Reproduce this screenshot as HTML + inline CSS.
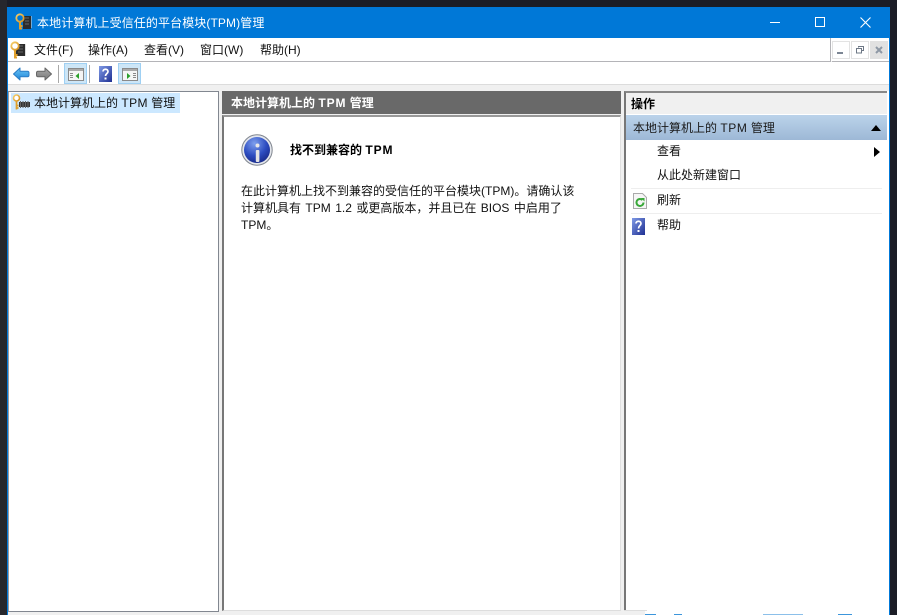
<!DOCTYPE html>
<html lang="zh-CN"><head><meta charset="utf-8"><title>TPM</title>
<style>
html,body{margin:0;padding:0;width:897px;height:615px;overflow:hidden;background:#1b1d26}
body{position:relative;font:12px/16px "Liberation Sans","Noto Sans CJK SC",sans-serif;color:#111}
.a{position:absolute;white-space:nowrap}
.b{position:absolute}
svg{position:absolute;display:block}
.t{letter-spacing:.9px}
</style></head><body>
<svg width="0" height="0" style="left:0;top:0"><defs>
<linearGradient id="q" x1="0" y1="0" x2="1" y2="1"><stop offset="0" stop-color="#7f9ae6"/><stop offset="1" stop-color="#1e2f92"/></linearGradient>
<linearGradient id="k" x1="0" y1="0" x2="1" y2="1"><stop offset="0" stop-color="#f6cf6a"/><stop offset="1" stop-color="#d8901c"/></linearGradient>
<linearGradient id="ar" x1="0" y1="0" x2="0" y2="1"><stop offset="0" stop-color="#6cc4f5"/><stop offset="1" stop-color="#1d86d8"/></linearGradient>
<linearGradient id="ag" x1="0" y1="0" x2="0" y2="1"><stop offset="0" stop-color="#a8a8a8"/><stop offset="1" stop-color="#7a7a7a"/></linearGradient>
<radialGradient id="i" cx=".4" cy=".25" r=".85"><stop offset="0" stop-color="#7ea0ee"/><stop offset=".55" stop-color="#2c4cc0"/><stop offset="1" stop-color="#15247e"/></radialGradient>
</defs></svg>
<div class="b" style="left:0;top:0;width:7px;height:615px;background:#26272c"></div>
<div class="b" style="left:7px;top:7px;width:883px;height:608px;background:#0078d7"></div>
<div class="b" style="left:8px;top:38px;width:881px;height:577px;background:#f0f0f0"></div>

<!-- title bar -->
<svg style="left:15px;top:13px" width="18" height="18" viewBox="0 0 18 18"><rect x="8" y="3" width="8" height="13" fill="#2c2c2c"/><path d="M16 4h1M16 6h1M16 8h1M16 10h1M16 12h1M16 14h1" stroke="#ddd"/><path d="M10 5h4M10 8h4M10 11h4" stroke="#666"/><circle cx="5" cy="5" r="3.700" fill="none" stroke="url(#k)" stroke-width="1.800"/><path d="M5 8.500v8M5 13h2.500M5 15.500h2" stroke="#e0a02c" stroke-width="2"/></svg>
<div class="a" style="left:37px;top:14px;color:#fff;line-height:18px;letter-spacing:.1px">本地计算机上受信任的平台模块(TPM)管理</div>
<div class="b" style="left:770px;top:22px;width:10px;height:1px;background:#fff"></div>
<div class="b" style="left:815px;top:17px;width:8px;height:8px;border:1px solid #fff"></div>
<svg style="left:860px;top:17px" width="11" height="11" viewBox="0 0 11 11"><path d="M.5.500l10 10M10.500.500l-10 10" stroke="#fff" stroke-width="1.100"/></svg>

<!-- menu -->
<div class="b" style="left:8px;top:38px;width:881px;height:23px;background:#fff"></div>
<div class="b" style="left:8px;top:61px;width:823px;height:1px;background:#b4b4b8"></div>
<div class="b" style="left:830px;top:38px;width:1px;height:24px;background:#b4b4b8"></div>
<div class="b" style="left:832px;top:61px;width:57px;height:1px;background:#b4b4b8"></div>
<svg style="left:10px;top:41px" width="18" height="19" viewBox="0 0 18 19"><rect x="6" y="3" width="9" height="12" fill="#2c2c2c"/><path d="M15 4h1M15 6h1M15 8h1M15 10h1M15 12h1M15 14h1" stroke="#bbb"/><path d="M8 5h5M8 8h5M8 11h5" stroke="#666"/><circle cx="5" cy="5" r="3.700" fill="#fff" stroke="url(#k)" stroke-width="1.800"/><path d="M5 8.500v9M5 14h2.500M5 16.500h2" stroke="#e0a02c" stroke-width="2"/></svg>
<div class="a" style="left:34px;top:42px">文件(F)</div>
<div class="a" style="left:88px;top:42px">操作(A)</div>
<div class="a" style="left:144px;top:42px">查看(V)</div>
<div class="a" style="left:200px;top:42px">窗口(W)</div>
<div class="a" style="left:260px;top:42px">帮助(H)</div>
<div class="b" style="left:832px;top:41px;width:16px;height:16px;border:1px solid #e3e3e3;background:#fff"></div>
<div class="b" style="left:837px;top:52px;width:6px;height:2px;background:#7c8694"></div>
<div class="b" style="left:851px;top:41px;width:16px;height:16px;border:1px solid #e3e3e3;background:#fff"></div>
<svg style="left:856px;top:46px" width="8" height="8" viewBox="0 0 8 8"><path d="M2.500 1.500V.500h5v4H6" fill="none" stroke="#6e7886"/><rect x=".5" y="2.500" width="5" height="4.500" fill="#fff" stroke="#6e7886"/></svg>
<div class="b" style="left:870px;top:41px;width:18px;height:18px;background:#e1e1e1"></div>
<svg style="left:875px;top:46px" width="8" height="8" viewBox="0 0 8 8"><path d="M1 1l6 6M7 1L1 7" stroke="#8e98a5" stroke-width="2"/></svg>

<!-- toolbar -->
<div class="b" style="left:8px;top:62px;width:881px;height:22px;background:#fff"></div>
<div class="b" style="left:8px;top:84px;width:881px;height:1px;background:#dcdcdc"></div>
<svg style="left:13px;top:67px" width="17" height="14" viewBox="0 0 17 14"><path d="M.5 7L7 1v3.200h7.500Q16 4.200 16 6v2Q16 9.800 14.500 9.800H7V13z" fill="url(#ar)" stroke="#2a7cc6" stroke-linejoin="round"/></svg>
<svg style="left:36px;top:67px" width="16" height="14" viewBox="0 0 16 14"><path d="M15.500 7L9 1v3.200H2Q.5 4.200.5 6v2Q.5 9.800 2 9.800h7V13z" fill="url(#ag)" stroke="#666" stroke-linejoin="round"/></svg>
<div class="b" style="left:58px;top:65px;width:1px;height:18px;background:#a8a8a8"></div>
<div class="b" style="left:64px;top:63px;width:21px;height:19px;background:#cde6f7;border:1px solid #9fd0f3"></div>
<svg style="left:68px;top:68px" width="16" height="13" viewBox="0 0 16 13"><rect x=".5" y=".5" width="15" height="12" fill="#f5f5f5" stroke="#8a8a8a"/><rect x="1" y="1" width="14" height="2" fill="#aaa"/><path d="M2 5.500h3M2 7.500h3M2 9.500h3" stroke="#888"/><path d="M11 5v6L7.500 8z" fill="#2aa02a"/></svg>
<div class="b" style="left:89px;top:65px;width:1px;height:18px;background:#a8a8a8"></div>
<svg style="left:99px;top:66px" width="13" height="16" viewBox="0 0 13 16"><rect width="13" height="16" fill="url(#q)"/><path d="M4 5.500C4 2.500 9 2.500 9 5.500C9 7.500 6.500 7.500 6.500 10" fill="none" stroke="#fff" stroke-width="1.700"/><rect x="5.500" y="11.500" width="2" height="2" fill="#fff"/></svg>
<div class="b" style="left:118px;top:63px;width:21px;height:19px;background:#cde6f7;border:1px solid #9fd0f3"></div>
<svg style="left:122px;top:68px" width="16" height="13" viewBox="0 0 16 13"><rect x=".5" y=".5" width="15" height="12" fill="#f5f5f5" stroke="#8a8a8a"/><rect x="1" y="1" width="14" height="2" fill="#aaa"/><path d="M11 5.500h3M11 7.500h3M11 9.500h3" stroke="#888"/><path d="M5 5v6L8.500 8z" fill="#2aa02a"/></svg>

<!-- left pane -->
<div class="b" style="left:8px;top:91px;width:209px;height:519px;background:#fff;border:1px solid #828790;border-left-color:#9a9da6"></div>
<div class="b" style="left:11px;top:93px;width:169px;height:20px;background:#cce8ff"></div>
<svg style="left:12px;top:94px" width="19" height="17" viewBox="0 0 19 17"><circle cx="4.500" cy="4" r="3" fill="#fff" stroke="url(#k)" stroke-width="1.600"/><path d="M4.500 7v8.500M4.500 11.500h2M4.500 14h2" stroke="#e0a02c" stroke-width="1.700"/><rect x="7" y="8" width="11" height="5" fill="#333"/><path d="M8.500 7v7M11 7v7M13.500 7v7M16 7v7" stroke="#666"/></svg>
<div class="a" style="left:34px;top:95px">本地计算机上的 <span style="letter-spacing:.4px">TPM</span> 管理</div>

<!-- middle pane -->
<div class="b" style="left:222px;top:91px;width:399px;height:23px;background:#696969"></div>
<div class="a" style="left:231px;top:95px;color:#fff;font-weight:bold">本地计算机上的 <span class="t">TPM</span> 管理</div>
<div class="b" style="left:222px;top:115px;width:399px;height:496px;background:#fff;border-left:2px solid #777;border-top:2px solid #999;border-right:1px solid #e0e0e0;border-bottom:1px solid #ddd;box-sizing:border-box"></div>
<svg style="left:241px;top:134px" width="32" height="32" viewBox="0 0 32 32"><circle cx="16" cy="16" r="15.200" fill="#e3e6ec" stroke="#80868f"/><circle cx="16" cy="16" r="13" fill="url(#i)"/><circle cx="16.500" cy="11.500" r="2" fill="#e8e8e8"/><rect x="14.800" y="16" width="3.600" height="12" rx="1" fill="#e4e4e4"/></svg>
<div class="a" style="left:290px;top:142px;font-weight:bold;color:#000">找不到兼容的 <span class="t">TPM</span></div>
<div class="a" style="left:241px;top:183px;line-height:17px;color:#111;word-spacing:1.100px">在此计算机上找不到兼容的受信任的平台模块(TPM)。请确认该<br>计算机具有 TPM 1.2 或更高版本，并且已在 BIOS 中启用了<br>TPM。</div>

<!-- right pane -->
<div class="b" style="left:624px;top:91px;width:263px;height:519px;background:#fff;border-left:2px solid #777;border-top:2px solid #888;box-sizing:border-box"></div>
<div class="b" style="left:887px;top:91px;width:2px;height:524px;background:#fff"></div>
<div class="b" style="left:626px;top:93px;width:261px;height:21px;background:#f0f0f0"></div>
<div class="a" style="left:631px;top:96px;font-weight:bold;color:#000">操作</div>
<div class="b" style="left:626px;top:115px;width:261px;height:25px;background:linear-gradient(#bbd3ea,#9db8d6)"></div>
<div class="a" style="left:633px;top:120px;color:#1a1a1a">本地计算机上的 <span style="letter-spacing:.6px">TPM</span> 管理</div>
<svg style="left:871px;top:125px" width="10" height="6" viewBox="0 0 10 6"><path d="M5 0l5 6H0z" fill="#000"/></svg>
<div class="a" style="left:657px;top:143px">查看</div>
<svg style="left:874px;top:147px" width="6" height="10" viewBox="0 0 6 10"><path d="M0 0l6 5-6 5z" fill="#000"/></svg>
<div class="a" style="left:657px;top:167px">从此处新建窗口</div>
<div class="b" style="left:631px;top:188px;width:251px;height:1px;background:#eee"></div>
<svg style="left:633px;top:193px" width="14" height="16" viewBox="0 0 14 16"><path d="M.5.500h9l4 4v11H.5z" fill="#f6f6f6" stroke="#aaa"/><path d="M10.500 9.500a3.500 3.500 0 1 1-1-2.500" fill="none" stroke="#3aa83a" stroke-width="2"/><path d="M8 5h3.500v3.500z" fill="#3aa83a"/></svg>
<div class="a" style="left:657px;top:192px">刷新</div>
<div class="b" style="left:631px;top:213px;width:251px;height:1px;background:#eee"></div>
<svg style="left:632px;top:218px" width="13" height="17" viewBox="0 0 13 17"><rect width="13" height="17" fill="url(#q)"/><path d="M4 5.500C4 2.500 9 2.500 9 5.500C9 7.500 6.500 7.500 6.500 10.500" fill="none" stroke="#fff" stroke-width="1.700"/><rect x="5.500" y="12" width="2" height="2" fill="#fff"/></svg>
<div class="a" style="left:657px;top:217px">帮助</div>

<!-- bottom strip -->
<div class="b" style="left:8px;top:612px;width:637px;height:3px;background:#f0f0f0"></div>
<div class="b" style="left:645px;top:610px;width:244px;height:5px;background:#fff"></div>
<div class="b" style="left:624px;top:610px;width:23px;height:1px;background:#ddd"></div>
<div class="b" style="left:645px;top:614px;width:11px;height:1px;background:#3c96dc"></div>
<div class="b" style="left:674px;top:614px;width:8px;height:1px;background:#3c96dc"></div>
<div class="b" style="left:763px;top:614px;width:40px;height:1px;background:#8cc0ea"></div>
<div class="b" style="left:838px;top:614px;width:14px;height:1px;background:#3c96dc"></div>
</body></html>
